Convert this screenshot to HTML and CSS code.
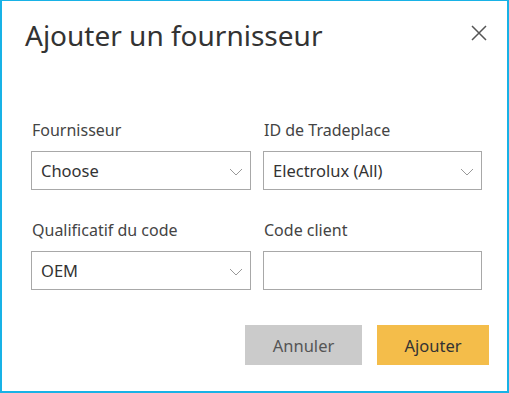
FILE: index.html
```html
<!DOCTYPE html>
<html lang="fr">
<head>
<meta charset="utf-8">
<title>Ajouter un fournisseur</title>
<link rel="stylesheet" href="styles.css">
</head>
<body>
<div class="dialog">
  <div class="header">
    <h1 class="title">Ajouter un fournisseur</h1>
    <button class="close" aria-label="Fermer">
      <svg width="16" height="16" viewBox="0 0 16 16"><path d="M1 1 L15 15 M15 1 L1 15" stroke="#555" stroke-width="1.5" fill="none"/></svg>
    </button>
  </div>
  <div class="form">
    <div class="field">
      <label class="label">Fournisseur</label>
      <div class="select"><span>Choose</span><svg class="chev" width="14" height="8" viewBox="0 0 14 8"><path d="M1 1 L7 7 L13 1" stroke="#999" stroke-width="1" fill="none"/></svg></div>
    </div>
    <div class="field">
      <label class="label">ID de Tradeplace</label>
      <div class="select"><span>Electrolux (All)</span><svg class="chev" width="14" height="8" viewBox="0 0 14 8"><path d="M1 1 L7 7 L13 1" stroke="#999" stroke-width="1" fill="none"/></svg></div>
    </div>
    <div class="field">
      <label class="label">Qualificatif du code</label>
      <div class="select"><span>OEM</span><svg class="chev" width="14" height="8" viewBox="0 0 14 8"><path d="M1 1 L7 7 L13 1" stroke="#999" stroke-width="1" fill="none"/></svg></div>
    </div>
    <div class="field">
      <label class="label">Code client</label>
      <div class="input"></div>
    </div>
  </div>
  <div class="actions">
    <button class="btn btn-cancel">Annuler</button>
    <button class="btn btn-add">Ajouter</button>
  </div>
</div>
</body>
</html>
```
FILE: styles.css
```css
html, body {
  margin: 0;
  padding: 0;
  background: #fff;
}
body {
  font-family: "Noto Sans", "Open Sans", sans-serif;
  color: #333;
}
.dialog {
  box-sizing: border-box;
  width: 509px;
  height: 393px;
  border-style: solid;
  border-color: #18b2e6;
  border-width: 1px 2px 2px 2px;
  display: flex;
  flex-direction: column;
}
.header {
  display: flex;
  justify-content: space-between;
  align-items: flex-start;
  padding: 15px 20px 0 23px;
}
.title {
  margin: 0;
  font-size: 28px;
  font-weight: 400;
  line-height: 38px;
  color: #333;
}
.close {
  border: 0;
  background: none;
  padding: 0;
  margin-top: 9px;
  width: 16px;
  height: 16px;
  display: block;
}
.close svg { display: block; }
.form {
  display: grid;
  grid-template-columns: 220px 219px;
  column-gap: 12px;
  row-gap: 30px;
  padding: 66px 0 0 29px;
}
.field {
  display: flex;
  flex-direction: column;
}
.label {
  font-size: 16px;
  line-height: 20px;
  color: #444;
  margin-left: 1px;
  margin-bottom: 11px;
}
.select, .input {
  box-sizing: border-box;
  height: 39px;
  border: 1px solid #a8a8a8;
  background: #fff;
  display: flex;
  align-items: center;
  justify-content: space-between;
  padding: 0 7px 0 9px;
  font-size: 16.5px;
  color: #333;
}
.chev { display: block; margin-top: 2px; }
.actions {
  display: flex;
  justify-content: flex-end;
  gap: 15px;
  padding: 35px 18px 0 0;
}
.btn {
  border: 0;
  height: 40px;
  font-family: inherit;
  font-size: 16.5px;
  padding: 0;
}
.btn-cancel {
  width: 117px;
  background: #cbcbcb;
  color: #555;
}
.btn-add {
  width: 112px;
  background: #f4bd4a;
  color: #333;
}
```
